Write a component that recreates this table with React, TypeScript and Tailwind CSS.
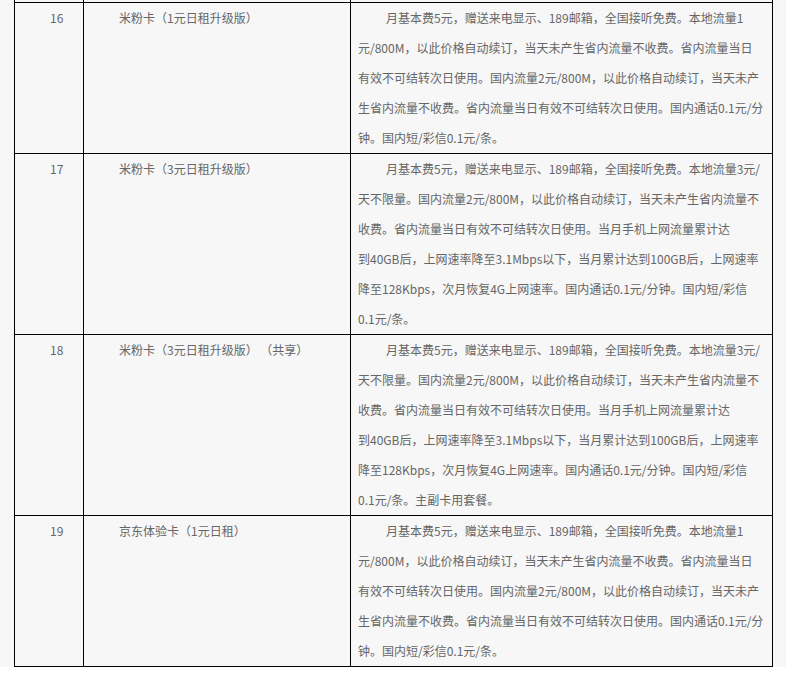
type Plan = {
  no: string;
  name: string;
  lines: string[];
};

const plans: Plan[] = [
  {
    no: '16',
    name: '米粉卡（1元日租升级版）',
    lines: [
      '月基本费5元，赠送来电显示、189邮箱，全国接听免费。本地流量1',
      '元/800M，以此价格自动续订，当天未产生省内流量不收费。省内流量当日',
      '有效不可结转次日使用。国内流量2元/800M，以此价格自动续订，当天未产',
      '生省内流量不收费。省内流量当日有效不可结转次日使用。国内通话0.1元/分',
      '钟。国内短/彩信0.1元/条。',
    ],
  },
  {
    no: '17',
    name: '米粉卡（3元日租升级版）',
    lines: [
      '月基本费5元，赠送来电显示、189邮箱，全国接听免费。本地流量3元/',
      '天不限量。国内流量2元/800M，以此价格自动续订，当天未产生省内流量不',
      '收费。省内流量当日有效不可结转次日使用。当月手机上网流量累计达',
      '到40GB后，上网速率降至3.1Mbps以下，当月累计达到100GB后，上网速率',
      '降至128Kbps，次月恢复4G上网速率。国内通话0.1元/分钟。国内短/彩信',
      '0.1元/条。',
    ],
  },
  {
    no: '18',
    name: '米粉卡（3元日租升级版） （共享）',
    lines: [
      '月基本费5元，赠送来电显示、189邮箱，全国接听免费。本地流量3元/',
      '天不限量。国内流量2元/800M，以此价格自动续订，当天未产生省内流量不',
      '收费。省内流量当日有效不可结转次日使用。当月手机上网流量累计达',
      '到40GB后，上网速率降至3.1Mbps以下，当月累计达到100GB后，上网速率',
      '降至128Kbps，次月恢复4G上网速率。国内通话0.1元/分钟。国内短/彩信',
      '0.1元/条。主副卡用套餐。',
    ],
  },
  {
    no: '19',
    name: '京东体验卡（1元日租）',
    lines: [
      '月基本费5元，赠送来电显示、189邮箱，全国接听免费。本地流量1',
      '元/800M，以此价格自动续订，当天未产生省内流量不收费。省内流量当日',
      '有效不可结转次日使用。国内流量2元/800M，以此价格自动续订，当天未产',
      '生省内流量不收费。省内流量当日有效不可结转次日使用。国内通话0.1元/分',
      '钟。国内短/彩信0.1元/条。',
    ],
  },
];

const cols = 'grid grid-cols-[69px_267px_423px]';

function PlanRow({ plan }: { plan: Plan }) {
  return (
    <div className={`${cols} border-b border-black`}>
      <div className="border-l border-black px-[7px] indent-[28px]">{plan.no}</div>
      <div className="border-l border-black px-[7px] indent-[28px] whitespace-pre">{plan.name}</div>
      <div className="border-x border-black px-[7px]">
        {plan.lines.map((line, i) => (
          <div key={i} className={`whitespace-nowrap ${i === 0 ? 'indent-[28px]' : ''}`}>
            {line}
          </div>
        ))}
      </div>
    </div>
  );
}

export default function App() {
  return (
    <div className="min-h-[680px] w-[786px] bg-white">
      <div
        className="bg-[#f7f7f7] text-[12px] leading-[30px] text-[#666]"
        style={{ fontFamily: '"Noto Sans CJK SC", "Noto Sans", sans-serif' }}
      >
        <div className="ml-[14px] w-[759px]">
          {/* tail of the previous row */}
          <div className={`${cols} h-[3px] border-b border-black`}>
            <div className="border-l border-black" />
            <div className="border-l border-black" />
            <div className="border-x border-black" />
          </div>
          {plans.map((p) => (
            <PlanRow key={p.no} plan={p} />
          ))}
        </div>
      </div>
    </div>
  );
}
